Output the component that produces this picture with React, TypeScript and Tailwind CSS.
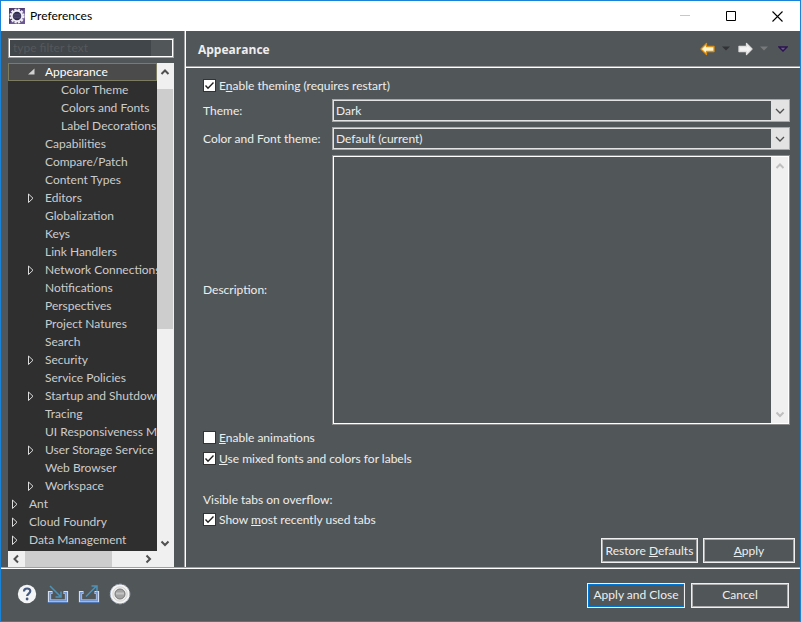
import { useState, type ReactNode } from "react";
import clsx from "clsx";

type TreeNode = { label: string; level: number; state?: "open" | "closed" };

const nodes: TreeNode[] = [
  { label: "Appearance", level: 1, state: "open" },
  { label: "Color Theme", level: 2 },
  { label: "Colors and Fonts", level: 2 },
  { label: "Label Decorations", level: 2 },
  { label: "Capabilities", level: 1 },
  { label: "Compare/Patch", level: 1 },
  { label: "Content Types", level: 1 },
  { label: "Editors", level: 1, state: "closed" },
  { label: "Globalization", level: 1 },
  { label: "Keys", level: 1 },
  { label: "Link Handlers", level: 1 },
  { label: "Network Connections", level: 1, state: "closed" },
  { label: "Notifications", level: 1 },
  { label: "Perspectives", level: 1 },
  { label: "Project Natures", level: 1 },
  { label: "Search", level: 1 },
  { label: "Security", level: 1, state: "closed" },
  { label: "Service Policies", level: 1 },
  { label: "Startup and Shutdown", level: 1, state: "closed" },
  { label: "Tracing", level: 1 },
  { label: "UI Responsiveness Monitoring", level: 1 },
  { label: "User Storage Service", level: 1, state: "closed" },
  { label: "Web Browser", level: 1 },
  { label: "Workspace", level: 1, state: "closed" },
  { label: "Ant", level: 0, state: "closed" },
  { label: "Cloud Foundry", level: 0, state: "closed" },
  { label: "Data Management", level: 0, state: "closed" },
];

const indents = ["pl-[2px]", "pl-[18px]", "pl-[34px]"];

function Chevron({ dir }: { dir: "up" | "down" | "left" | "right" }) {
  const paths = {
    up: "M1.5 7 5 3.5 8.5 7",
    down: "M1.5 3.5 5 7 8.5 3.5",
    left: "M7 1.5 3.5 5 7 8.5",
    right: "M3.5 1.5 7 5 3.5 8.5",
  };
  return (
    <svg width="10" height="10" viewBox="0 0 10 10" fill="none" stroke="currentColor" strokeWidth="2">
      <path d={paths[dir]} />
    </svg>
  );
}

function AppIcon() {
  return (
    <svg width="16" height="16" viewBox="0 0 16 16">
      <rect width="16" height="16" fill="#6a5794" />
      <path d="M0 0h16L0 16z" fill="#4d3b70" />
      <circle cx="8" cy="8" r="6.5" fill="none" stroke="#f0edf4" strokeWidth="2.2" strokeDasharray="2.2 1.203" />
      <circle cx="8" cy="8" r="5.2" fill="#2c2748" stroke="#f0edf4" strokeWidth="1.9" />
      <path d="M4.300 6.200h7.400M4 8h8M4.300 9.800h7.400" stroke="#5f5885" strokeWidth=".9" />
    </svg>
  );
}

function Twisty({ state }: { state?: "open" | "closed" }) {
  return (
    <svg width="12" height="12" viewBox="0 0 12 12" className="mr-[7px] shrink-0">
      {state === "open" && <path d="M8.5 2.5v6H2z" fill="#d0d0d0" />}
      {state === "closed" && <path d="M2.5 2v8.500L7 6.250z" fill="none" stroke="#dcdcdc" />}
    </svg>
  );
}

function NavTree() {
  const [selected, setSelected] = useState("Appearance");
  return (
    <div className="flex min-h-0 flex-1 flex-col">
      <div className="flex min-h-0 flex-1">
        <ul role="tree" aria-label="Preference pages" className="min-w-0 flex-1 overflow-hidden bg-[#2f2f2f]">
          {nodes.map((n) => (
            <li key={n.label} role="treeitem" aria-selected={n.label === selected} aria-level={n.level + 1}>
              <button
                onClick={() => setSelected(n.label)}
                className={clsx(
                  "flex h-[18px] w-full items-center overflow-hidden whitespace-nowrap",
                  n.label === selected ? "bg-[#4b4b4b] text-white outline outline-1 -outline-offset-1 outline-[#7c7c60]" : "text-[#cccccc]",
                  indents[n.level]
                )}
              >
                <Twisty state={n.state} />
                <span>{n.label}</span>
              </button>
            </li>
          ))}
        </ul>
        <div className="flex w-[17px] flex-col bg-[#f0f0f0] text-[#505050]">
          <button aria-label="Scroll up" className="flex h-[26px] w-4 items-start justify-center pt-1">
            <Chevron dir="up" />
          </button>
          <div className="h-60 w-4 bg-[#cdcdcd]" />
          <button aria-label="Scroll down" className="mt-auto flex h-[17px] w-4 items-center justify-center">
            <Chevron dir="down" />
          </button>
        </div>
      </div>
      <div className="flex h-4 items-center bg-[#f0f0f0] text-[#505050]">
        <button aria-label="Scroll left" className="flex w-[17px] pl-[3px]">
          <Chevron dir="left" />
        </button>
        <div className="h-full w-[87px] bg-[#cdcdcd]" />
        <button aria-label="Scroll right" className="mr-[17px] ml-auto flex w-4 pl-[2px]">
          <Chevron dir="right" />
        </button>
      </div>
    </div>
  );
}

function Check({ defaultChecked, children }: { defaultChecked?: boolean; children: ReactNode }) {
  return (
    <label className="flex h-5 gap-[3px]">
      <span className="grid content-start pt-[3px]">
        <input type="checkbox" defaultChecked={defaultChecked} className="peer col-start-1 row-start-1 size-[13px] appearance-none border border-[#333333] bg-white" />
        <svg viewBox="0 0 13 13" fill="none" stroke="#222222" strokeWidth="1.4" className="pointer-events-none invisible col-start-1 row-start-1 size-[13px] peer-checked:visible">
          <path d="M2.500 6.500 5 9.200 10.500 3.500" />
        </svg>
      </span>
      <span className="leading-5">{children}</span>
    </label>
  );
}

function Combo({ id, options }: { id: string; options: string[] }) {
  return (
    <div className="grid h-[23px] border border-[#a8a8a8]">
      <select id={id} className="col-start-1 row-start-1 w-full appearance-none border border-[#e3e3e3] bg-[#515658] pl-[2px] text-[#eeeeee]">
        {options.map((o) => (
          <option key={o}>{o}</option>
        ))}
      </select>
      <span className="pointer-events-none col-start-1 row-start-1 flex w-[18px] items-center justify-center justify-self-end bg-[#e3e3e3] text-[#505050]">
        <svg width="10" height="10" viewBox="0 0 10 10" fill="none" stroke="currentColor" strokeWidth="1.3">
          <path d="M1 3 5 7 9 3" />
        </svg>
      </span>
    </div>
  );
}

function PushButton({ primary, className, children }: { primary?: boolean; className?: string; children: ReactNode }) {
  return (
    <button className={clsx("h-[25px] border border-[#f0f0f0] text-[#eeeeee]", className)}>
      <span className={clsx("flex h-full items-center justify-center border", primary ? "border-[#0078d7]" : "border-[#adadad]")}>
        <span>{children}</span>
      </span>
    </button>
  );
}

function DropArrow({ color }: { color: string }) {
  return (
    <svg width="8" height="5" viewBox="0 0 8 5">
      <path d="M0 .5h8L4 4.5z" fill={color} />
    </svg>
  );
}

function TrayIcon({ out }: { out?: boolean }) {
  return (
    <svg width="22" height="20" viewBox="0 0 22 20" fill="none">
      <path d="M5.5 8.500H2.500v8.500h17v-8.500h-3" stroke="#d3def0" strokeWidth="3.2" />
      <path d="M5.500 8.800H2.800v8h16.400v-8h-2.700" stroke="#7596cf" strokeWidth="1.600" />
      <path d="M1 18.500h20" stroke="#5379b5" />
      {out ? (
        <path d="m8 12.500 10-10M13.500 2H19v5.500" stroke="#4f92b8" strokeWidth="1.500" />
      ) : (
        <path d="m3 2 10.500 10.500M14 7.500V13H8.500" stroke="#4f92b8" strokeWidth="1.500" />
      )}
    </svg>
  );
}

export default function App() {
  return (
    <div className="flex min-h-screen flex-col border border-[#1883d7] bg-[#515658] font-['Lato','Open_Sans',sans-serif] text-[12px] leading-4 text-[#eeeeee]">
      <header className="flex h-[30px] items-center bg-white pl-2 text-black">
        <AppIcon />
        <span className="ml-[5px] flex-1">Preferences</span>
        <button aria-label="Minimize" className="flex w-[46px] justify-center text-[#c8c8c8]">
          <svg width="10" height="10" stroke="currentColor"><path d="M0 4.500h10" /></svg>
        </button>
        <button aria-label="Maximize" className="flex w-[46px] justify-center">
          <svg width="10" height="10" fill="none" stroke="currentColor"><path d="M.5.5h9v9h-9z" /></svg>
        </button>
        <button aria-label="Close" className="flex w-[46px] justify-center">
          <svg width="11" height="11" stroke="currentColor" strokeWidth="1.1"><path d="m.5.5 10 10M10.500.5l-10 10" /></svg>
        </button>
      </header>

      <main className="flex flex-1">
        <aside className="flex w-[183px] shrink-0 flex-col pt-[7px] pr-[10px] pl-[7px]">
          <div className="mb-[5px] flex h-5 border border-[#a0a0a0]">
            <div className="flex w-full border border-white">
              <input
                aria-label="Filter"
                placeholder="type filter text"
                className="min-w-0 flex-1 bg-[#41464a] pl-[3px] text-[#eeeeee] placeholder:text-[#55585a]"
              />
              <span className="w-[21px]" />
            </div>
          </div>
          <NavTree />
        </aside>

        <section className="flex min-w-0 flex-1 flex-col border-l border-[#a0a0a0]">
          <div className="flex flex-1 flex-col border-l border-white">
            <div className="flex h-9 items-center border-b border-[#a0a0a0] pr-3 pl-3">
              <h1 className="flex-1 pt-[3px] font-['Open_Sans',sans-serif] font-bold">Appearance</h1>
              <button aria-label="Back">
                <svg width="16" height="14" viewBox="0 0 16 14">
                  <path d="M1 7 6.5 1.500v3h7.500v5H6.500v3z" fill="#fff6cf" stroke="#d98e17" strokeWidth="1.3" strokeLinejoin="round" />
                </svg>
              </button>
              <button aria-label="Back history" className="ml-[6px]"><DropArrow color="#303234" /></button>
              <button aria-label="Forward" className="ml-[7px]">
                <svg width="16" height="14" viewBox="0 0 16 14">
                  <path d="M15 7 9.5 1.500v3H2v5h7.500v3z" fill="#f4f4f4" stroke="#dedede" strokeWidth="1.3" strokeLinejoin="round" />
                </svg>
              </button>
              <button aria-label="Forward history" className="ml-[7px]"><DropArrow color="#77797b" /></button>
              <button aria-label="Menu" className="ml-[10px]">
                <svg width="10" height="6" viewBox="0 0 10 6">
                  <path d="M1 1h8L5 5z" fill="#6b5a88" stroke="#2c1450" strokeWidth="1.4" />
                </svg>
              </button>
            </div>

            <div className="flex flex-1 flex-col border-t border-white pt-2 pl-[17px]">
              <div className="flex flex-1 flex-col pr-[10px]">
                <Check defaultChecked>E<u>n</u>able theming (requires restart)</Check>
                <div className="mt-[3px] grid flex-1 grid-cols-[129px_minmax(0,1fr)] grid-rows-[23px_23px_1fr] items-center gap-y-[5px]">
                  <label htmlFor="theme">Theme:</label>
                  <Combo id="theme" options={["Dark", "Light", "Classic"]} />
                  <label htmlFor="font-theme" className="whitespace-nowrap">Color and Font theme:</label>
                  <Combo id="font-theme" options={["Default (current)", "Reduced Palette"]} />
                  <label htmlFor="description">Description:</label>
                  <div className="flex h-full border border-[#8b8b8b]">
                    <div className="flex flex-1 border border-white">
                      <textarea id="description" readOnly className="block flex-1 resize-none px-1" />
                      <div className="flex w-[17px] flex-col items-center justify-between bg-[#f0f0f0] py-1 text-[#bfbfbf]">
                        <Chevron dir="up" />
                        <Chevron dir="down" />
                      </div>
                    </div>
                  </div>
                </div>
                <div className="mt-[3px] flex flex-col gap-px">
                  <Check><u>E</u>nable animations</Check>
                  <Check defaultChecked><u>U</u>se mixed fonts and colors for labels</Check>
                </div>
                <fieldset className="mt-[23px]">
                  <legend className="mb-[2px]">Visible tabs on overflow:</legend>
                  <Check defaultChecked>Show <u>m</u>ost recently used tabs</Check>
                </fieldset>
              </div>
              <div className="mt-2 mb-1 flex justify-end gap-[5px] pr-[5px]">
                <PushButton className="w-[97px]">Restore <u>D</u>efaults</PushButton>
                <PushButton className="w-[92px]"><u>A</u>pply</PushButton>
              </div>
            </div>
          </div>
        </section>
      </main>

      <footer className="border-t border-[#a0a0a0]">
        <div className="flex h-[53px] items-center border-t border-white pr-[11px] pl-4">
          <div className="flex items-center pb-[2px]">
            <button aria-label="Help">
              <svg width="20" height="20" viewBox="0 0 20 20">
                <circle cx="10" cy="10" r="9.200" fill="#f3f4f6" />
                <path d="M7 7.500c0-4 6.300-3.800 6.300-.4 0 2.400-3.200 2.500-3.200 5" fill="none" stroke="#465a80" strokeWidth="2.200" />
                <circle cx="10.100" cy="15" r="1.400" fill="#465a80" />
              </svg>
            </button>
            <button aria-label="Import" className="ml-[10px]"><TrayIcon /></button>
            <button aria-label="Export" className="ml-[9px]"><TrayIcon out /></button>
            <button aria-label="Oomph recorder" className="ml-[9px]">
              <svg width="22" height="22" viewBox="0 0 22 22">
                <circle cx="11" cy="11" r="9.800" fill="#f4f4f4" stroke="#a9b3c6" strokeDasharray="3 1.500" />
                <circle cx="11" cy="11" r="7.200" fill="#ececec" stroke="#d5d5d5" />
                <circle cx="11" cy="11" r="5" fill="#a3a3a3" stroke="#777777" />
                <path d="M7 10.500h8" stroke="#c4c4c4" strokeWidth="2" />
              </svg>
            </button>
          </div>
          <div className="ml-auto flex gap-[6px]">
            <PushButton primary className="w-[98px]">Apply and Close</PushButton>
            <PushButton className="w-[98px]">Cancel</PushButton>
          </div>
        </div>
      </footer>
    </div>
  );
}
